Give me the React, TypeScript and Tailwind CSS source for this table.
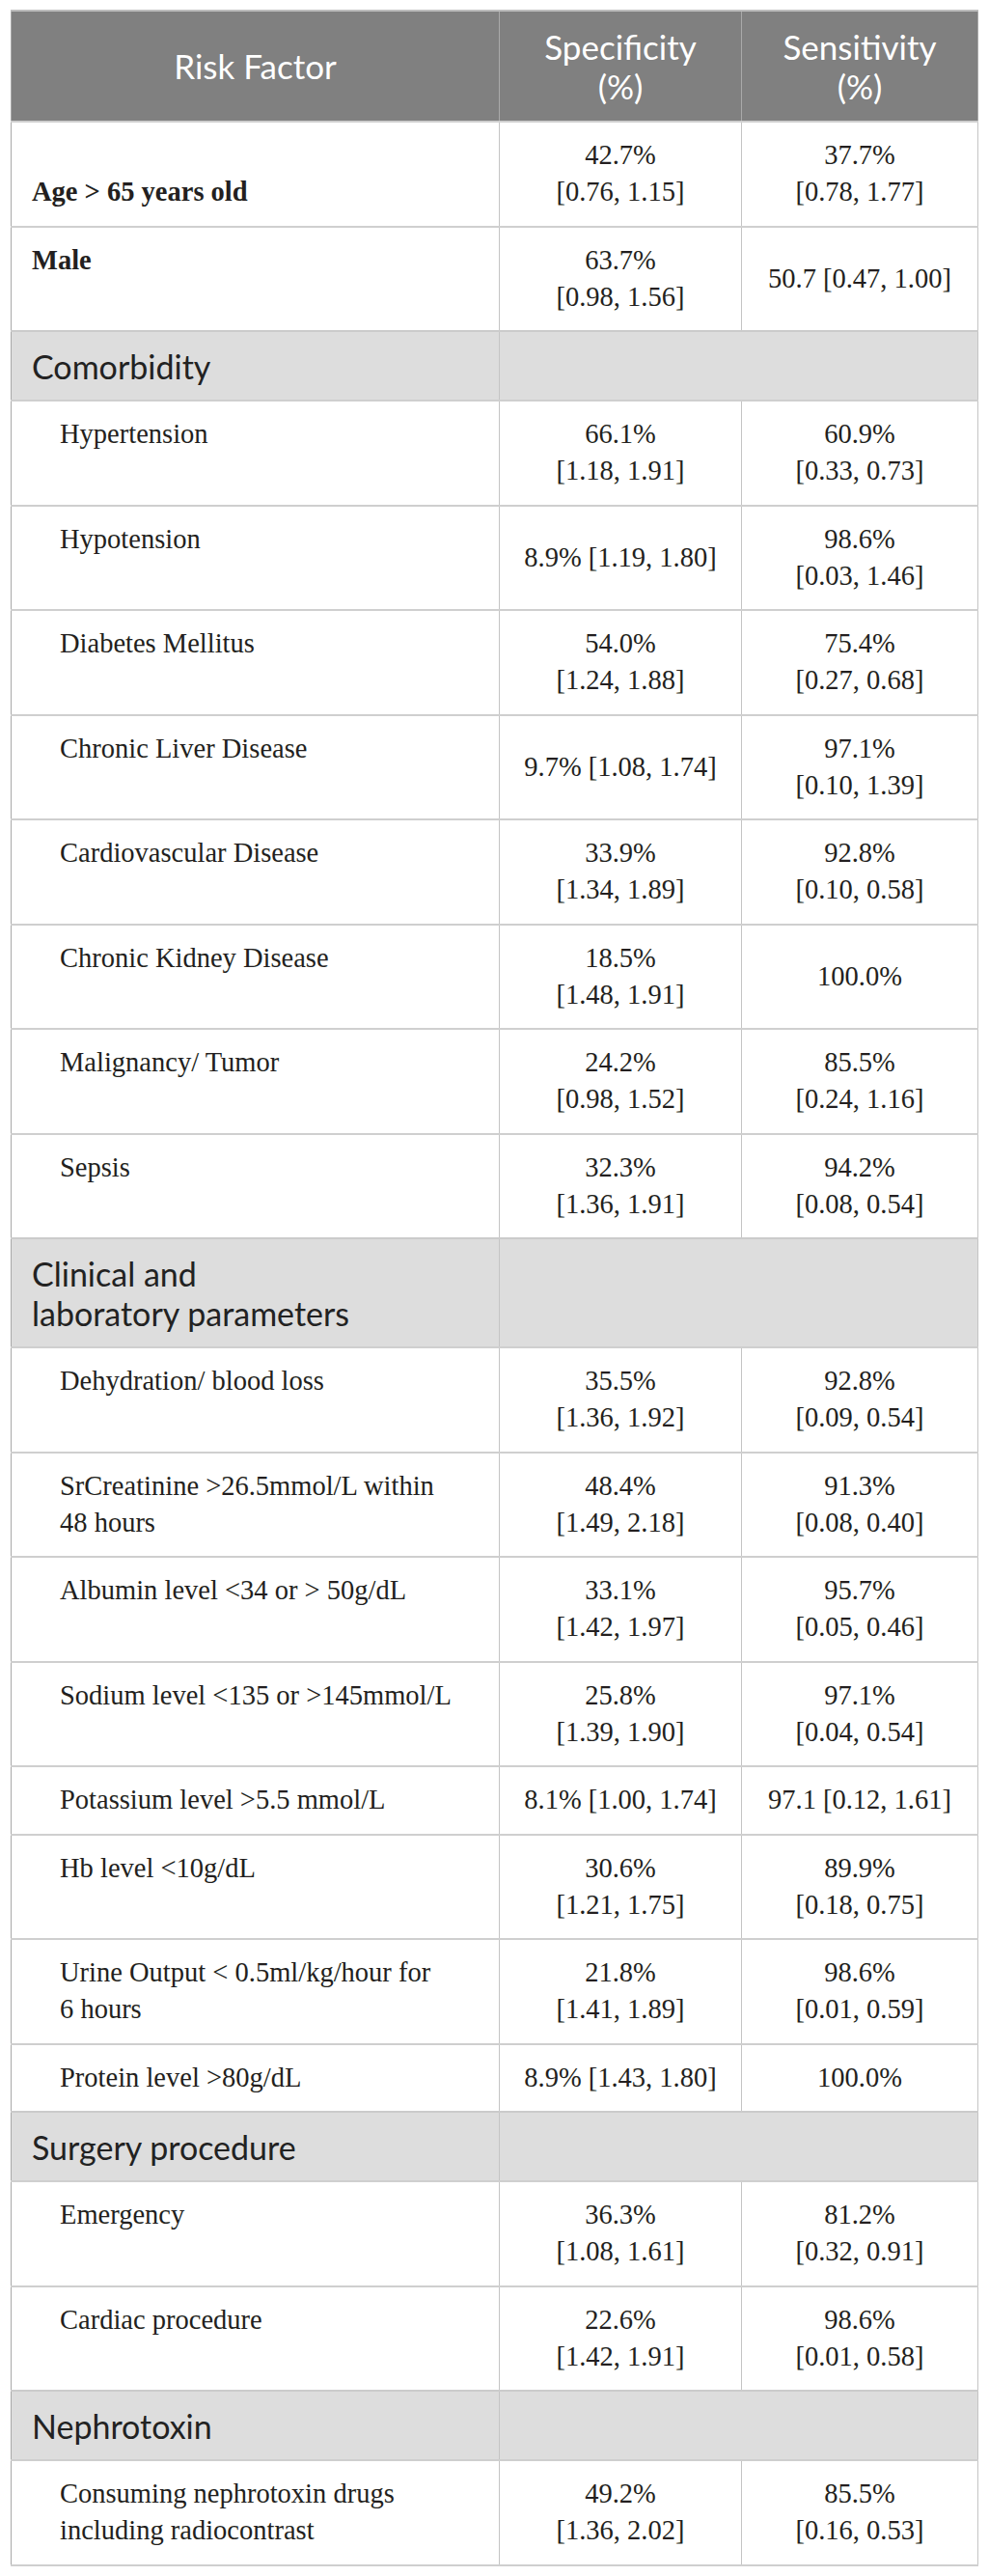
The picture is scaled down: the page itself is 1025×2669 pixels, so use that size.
type Row =
  | { kind: "section"; label: string[] }
  | {
      kind: "item";
      label: string[];
      bold?: boolean;
      indent?: boolean;
      align?: "top" | "bottom";
      spec: string[];
      sens: string[];
    };

const rows: Row[] = [
  { kind: "item", label: ["Age > 65 years old"], bold: true, align: "bottom", spec: ["42.7%", "[0.76, 1.15]"], sens: ["37.7%", "[0.78, 1.77]"] },
  { kind: "item", label: ["Male"], bold: true, spec: ["63.7%", "[0.98, 1.56]"], sens: ["50.7 [0.47, 1.00]"] },
  { kind: "section", label: ["Comorbidity"] },
  { kind: "item", indent: true, label: ["Hypertension"], spec: ["66.1%", "[1.18, 1.91]"], sens: ["60.9%", "[0.33, 0.73]"] },
  { kind: "item", indent: true, label: ["Hypotension"], spec: ["8.9% [1.19, 1.80]"], sens: ["98.6%", "[0.03, 1.46]"] },
  { kind: "item", indent: true, label: ["Diabetes Mellitus"], spec: ["54.0%", "[1.24, 1.88]"], sens: ["75.4%", "[0.27, 0.68]"] },
  { kind: "item", indent: true, label: ["Chronic Liver Disease"], spec: ["9.7% [1.08, 1.74]"], sens: ["97.1%", "[0.10, 1.39]"] },
  { kind: "item", indent: true, label: ["Cardiovascular Disease"], spec: ["33.9%", "[1.34, 1.89]"], sens: ["92.8%", "[0.10, 0.58]"] },
  { kind: "item", indent: true, label: ["Chronic Kidney Disease"], spec: ["18.5%", "[1.48, 1.91]"], sens: ["100.0%"] },
  { kind: "item", indent: true, label: ["Malignancy/ Tumor"], spec: ["24.2%", "[0.98, 1.52]"], sens: ["85.5%", "[0.24, 1.16]"] },
  { kind: "item", indent: true, label: ["Sepsis"], spec: ["32.3%", "[1.36, 1.91]"], sens: ["94.2%", "[0.08, 0.54]"] },
  { kind: "section", label: ["Clinical and", "laboratory parameters"] },
  { kind: "item", indent: true, label: ["Dehydration/ blood loss"], spec: ["35.5%", "[1.36, 1.92]"], sens: ["92.8%", "[0.09, 0.54]"] },
  { kind: "item", indent: true, label: ["SrCreatinine >26.5mmol/L within", "48 hours"], spec: ["48.4%", "[1.49, 2.18]"], sens: ["91.3%", "[0.08, 0.40]"] },
  { kind: "item", indent: true, label: ["Albumin level <34 or > 50g/dL"], spec: ["33.1%", "[1.42, 1.97]"], sens: ["95.7%", "[0.05, 0.46]"] },
  { kind: "item", indent: true, label: ["Sodium level <135 or >145mmol/L"], spec: ["25.8%", "[1.39, 1.90]"], sens: ["97.1%", "[0.04, 0.54]"] },
  { kind: "item", indent: true, label: ["Potassium level >5.5 mmol/L"], spec: ["8.1% [1.00, 1.74]"], sens: ["97.1 [0.12, 1.61]"] },
  { kind: "item", indent: true, label: ["Hb level <10g/dL"], spec: ["30.6%", "[1.21, 1.75]"], sens: ["89.9%", "[0.18, 0.75]"] },
  { kind: "item", indent: true, label: ["Urine Output < 0.5ml/kg/hour for", "6 hours"], spec: ["21.8%", "[1.41, 1.89]"], sens: ["98.6%", "[0.01, 0.59]"] },
  { kind: "item", indent: true, label: ["Protein level >80g/dL"], spec: ["8.9% [1.43, 1.80]"], sens: ["100.0%"] },
  { kind: "section", label: ["Surgery procedure"] },
  { kind: "item", indent: true, label: ["Emergency"], spec: ["36.3%", "[1.08, 1.61]"], sens: ["81.2%", "[0.32, 0.91]"] },
  { kind: "item", indent: true, label: ["Cardiac procedure"], spec: ["22.6%", "[1.42, 1.91]"], sens: ["98.6%", "[0.01, 0.58]"] },
  { kind: "section", label: ["Nephrotoxin"] },
  {
    kind: "item",
    indent: true,
    label: ["Consuming nephrotoxin drugs", "including radiocontrast"],
    spec: ["49.2%", "[1.36, 2.02]"],
    sens: ["85.5%", "[0.16, 0.53]"],
  },
];

const sans = "font-['Lato','Open_Sans',sans-serif]";
const serif = "font-['Liberation_Serif','Times_New_Roman',serif]";

function Lines({ items }: { items: string[] }) {
  return (
    <>
      {items.map((t, i) => (
        <div key={i} className="whitespace-nowrap">
          {t}
        </div>
      ))}
    </>
  );
}

export default function App() {
  return (
    <div className="min-h-screen bg-white pt-[10px] pl-[11px]">
      <table className="w-[1002px] table-fixed border-collapse border-t-2 border-t-[#bdbdbd] border-b-2 border-b-[#cfcfcf]">
        <colgroup>
          <col className="w-[506px]" />
          <col className="w-[251px]" />
          <col className="w-[245px]" />
        </colgroup>
        <thead>
          <tr className={`bg-[#808080] text-white ${sans} text-[35px] leading-[41px]`}>
            <th className="h-[115px] border-l border-l-[#a9a9a9] border-r border-r-[#a9a9a9] px-4 text-center font-normal">
              Risk Factor
            </th>
            <th className="border-r border-r-[#a9a9a9] px-2 text-center font-normal">
              Specificity
              <br />
              (%)
            </th>
            <th className="border-r border-r-[#a9a9a9] px-2 text-center font-normal">
              Sensitivity
              <br />
              (%)
            </th>
          </tr>
        </thead>
        <tbody>
          {rows.map((r, i) =>
            r.kind === "section" ? (
              <tr key={i} className="bg-[#dddddd] border-t-2 border-t-[#cbcbcb]">
                <td
                  className={`border-l border-l-[#a9a9a9] border-r border-r-[#c4c4c4] pl-[21px] pr-4 py-[14.5px] text-[34px] leading-[41px] text-[#222222] ${sans}`}
                >
                  <Lines items={r.label} />
                </td>
                <td colSpan={2} className="border-r border-r-[#c4c4c4]" />
              </tr>
            ) : (
              <tr key={i} className={`border-t-2 border-t-[#cfcfcf] text-[28.5px] leading-[38px] text-[#231f20] ${serif}`}>
                <td
                  className={`border-l border-l-[#a9a9a9] border-r border-r-[#c4c4c4] pr-4 py-[15.25px] ${
                    r.indent ? "pl-[50px]" : "pl-[21px]"
                  } ${r.bold ? "font-bold" : ""} ${r.align === "bottom" ? "align-bottom" : "align-top"}`}
                >
                  <Lines items={r.label} />
                </td>
                <td className="border-r border-r-[#c4c4c4] px-2 py-[15.25px] text-center align-middle">
                  <Lines items={r.spec} />
                </td>
                <td className="border-r border-r-[#c4c4c4] px-2 py-[15.25px] text-center align-middle">
                  <Lines items={r.sens} />
                </td>
              </tr>
            )
          )}
        </tbody>
      </table>
    </div>
  );
}
